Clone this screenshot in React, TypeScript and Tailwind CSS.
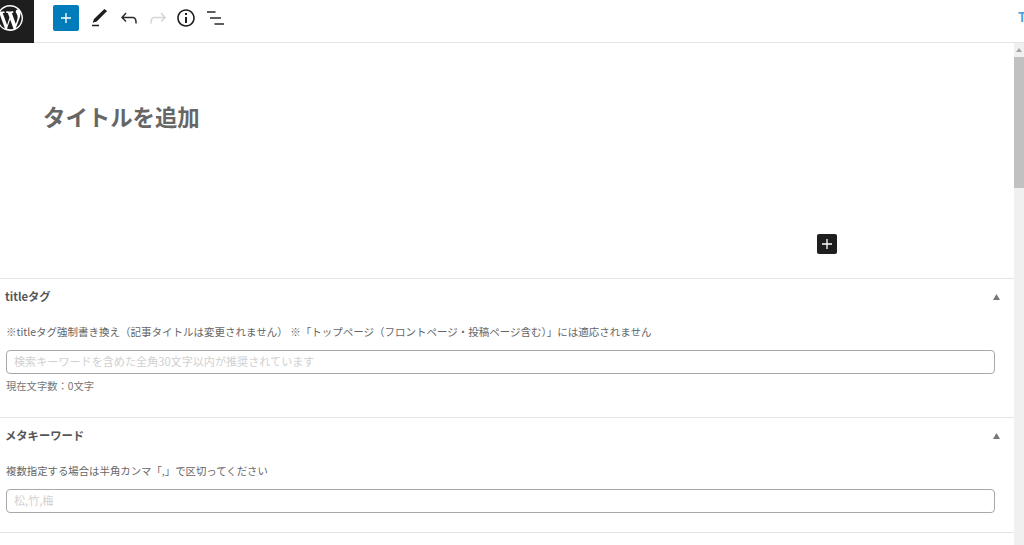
import React from "react";

const jp = "font-['Noto_Sans_CJK_JP','Noto_Sans',sans-serif]";

function Section({ title, desc, descClass, placeholder, note }: { title: string; desc: string; descClass: string; placeholder: string; note?: string }) {
  return (
    <section className="border-t border-[#e2e4e7] pl-[6px] pr-[19px]">
      <div className="flex h-[35px] items-center justify-between">
        <h2 className="ml-[-1px] text-[11.3px] font-bold text-[#555]">{title}</h2>
        <svg width="7" height="6" viewBox="0 0 7 6" className="mr-[-5px]"><path d="M3.500 0 7 6H0z" fill="#777" /></svg>
      </div>
      <p className={`mt-[9px] h-[18px] leading-[18px] text-[#666] ${descClass}`}>{desc}</p>
      <div className="mt-[9px] flex h-[24px] items-center rounded-[4px] border border-[#a8a8a8] bg-white px-[7px] pb-[1px] text-[11.1px] text-[#d0d0d0]">{placeholder}</div>
      {note ? <p className="mt-[4px] h-[16px] text-[10.3px] leading-[16px] text-[#777]">{note}</p> : null}
      <div className={note ? "h-[23px]" : "h-[19px]"} />
    </section>
  );
}

export default function App() {
  return (
    <div className={`flex h-[545px] w-[1024px] flex-col overflow-hidden bg-white ${jp}`}>
      <header className="flex h-[43px] shrink-0 items-start border-b border-[#e2e4e7]">
        <div className="flex h-[43px] w-[34px] shrink-0 items-start justify-end overflow-hidden bg-[#1e1e1e] pt-[5px]">
          <svg width="26" height="26" viewBox="0 0 20 20" className="mr-[11px] shrink-0" fill="#fff">
            <path d="M20 10c0-5.51-4.49-10-10-10C4.480 0 0 4.490 0 10c0 5.520 4.480 10 10 10 5.510 0 10-4.480 10-10zM7.780 15.370L4.370 6.220c.55-.02 1.170-.08 1.170-.08.5-.06.44-1.130-.06-1.110 0 0-1.450.11-2.370.11-.18 0-.37 0-.58-.01C4.120 2.690 6.890 1.110 10 1.110c2.330 0 4.450.87 6.050 2.340-.68-.11-1.650.39-1.650 1.580 0 .74.450 1.360.9 2.100.35.61.55 1.360.55 2.460 0 1.490-1.400 5-1.400 5l-3.030-8.350c.54-.02.82-.17.82-.17.5-.05.44-1.250-.06-1.220 0 0-1.440.12-2.380.12-.87 0-2.330-.12-2.330-.12-.5-.03-.56 1.200-.06 1.220l.92.08 1.260 3.410zM17.410 10c.24-.64.74-1.870.43-4.250.7 1.290 1.050 2.710 1.050 4.250 0 3.290-1.730 6.240-4.400 7.780.97-2.590 1.940-5.200 2.920-7.780zM6.100 18.090C3.120 16.650 1.110 13.530 1.110 10c0-1.300.23-2.480.72-3.590C3.250 10.300 4.670 14.200 6.100 18.090zm4.030-6.860l2.580 6.980c-.86.290-1.760.45-2.710.45-.79 0-1.570-.11-2.290-.33.81-2.380 1.630-4.740 2.420-7.100z" />
          </svg>
        </div>
        <button className="ml-[19px] mt-[5px] flex h-[26px] w-[26px] items-center justify-center rounded-[2px] bg-[#007cba]">
          <svg width="12" height="12" viewBox="0 0 12 12"><path d="M6 1v10M1 6h10" stroke="#fff" strokeWidth="1.300" /></svg>
        </button>
        <div className="ml-[8px] mt-[6px] flex h-[24px] items-center gap-[5px]">
          <svg width="24" height="24" viewBox="0 0 24 24" fill="#1e1e1e"><path d="M20.100 5.100 17.400 3 7 13l-1.300 3.700 4-1.100L20.100 5.100zM5 20.300h7v-1.500H5v1.500z" /></svg>
          <svg width="24" height="24" viewBox="0 0 24 24" fill="#2a2a2a" className="ml-[1px]"><path d="M18.300 11.700c-.6-.6-1.400-.9-2.300-.9H6.700l2.900-3.300-1.100-1-4.500 5L8.500 16l1-1-2.700-2.700H16c.5 0 .9.200 1.300.5 1 1 1 3.400 1 4.500v.3h1.500v-.2c0-1.500 0-4.300-1.500-5.700z" /></svg>
          <svg width="24" height="24" viewBox="0 0 24 24" fill="#d3d5d8"><path d="M15.600 6.500l-1.100 1 2.900 3.300H8c-.9 0-1.700.3-2.300.9-1.400 1.500-1.400 4.200-1.400 5.600v.2h1.500v-.3c0-1.100 0-3.500 1-4.500.3-.3.700-.5 1.300-.5h9.200L14.500 15l1.100 1.100 4.600-4.600-4.600-5z" /></svg>
          <svg width="24" height="24" viewBox="0 0 24 24" fill="#1e1e1e" className="ml-[-1px]"><path d="M12 3.200c-4.800 0-8.800 3.900-8.800 8.800 0 4.800 3.900 8.800 8.800 8.800 4.800 0 8.800-3.900 8.800-8.800 0-4.800-4-8.800-8.800-8.800zm0 16c-4 0-7.200-3.300-7.200-7.200C4.800 8 8 4.800 12 4.800s7.200 3.300 7.200 7.200c0 4-3.200 7.200-7.200 7.200zM11 17h2v-6h-2v6zm0-8h2V7h-2v2z" /></svg>
          <svg width="24" height="24" viewBox="0 0 24 24" fill="#2a2a2a" className="ml-[1px]"><path d="M3 5.300h8.500v1.500H3V5.300zM6 11.300h11v1.500H6v-1.500zM10.500 17.300H20v1.500h-9.500v-1.500z" /></svg>
        </div>
        <span className="ml-auto mt-[9px] mr-[-2px] text-[13px] leading-[16px] font-bold text-[#4fa3dc]">T</span>
      </header>
      <div className="flex min-h-0 flex-1">
        <main className="min-w-0 flex-1 overflow-hidden">
          <div className="h-[235px] pl-[43px] pt-[58px]">
            <h1 className="text-[22.4px] leading-[30px] font-bold text-[#666]">タイトルを追加</h1>
            <div className="ml-[774px] mt-[103px] flex h-[20px] w-[20px] items-center justify-center rounded-[2px] bg-[#1e1e1e]">
              <svg width="12" height="12" viewBox="0 0 12 12"><path d="M6 1v10M1 6h10" stroke="#fff" strokeWidth="1.300" /></svg>
            </div>
          </div>
          <Section title="titleタグ" descClass="text-[10.5px]" desc="※titleタグ強制書き換え（記事タイトルは変更されません） ※「トップページ（フロントページ・投稿ページ含む）」には適応されません" placeholder="検索キーワードを含めた全角30文字以内が推奨されています" note="現在文字数：0文字" />
          <Section title="メタキーワード" descClass="text-[10.4px]" desc="複数指定する場合は半角カンマ「,」で区切ってください" placeholder="松,竹,梅" />
          <div className="border-t border-[#e2e4e7]" />
        </main>
        <aside className="flex w-[10px] shrink-0 flex-col bg-[#f0f0f0]">
          <div className="flex h-[14px] items-center justify-center">
            <svg width="6" height="4" viewBox="0 0 6 4"><path d="M3 0 6 4H0z" fill="#a3a3a3" /></svg>
          </div>
          <div className="h-[131px] bg-[#c1c1c1]" />
        </aside>
      </div>
    </div>
  );
}
